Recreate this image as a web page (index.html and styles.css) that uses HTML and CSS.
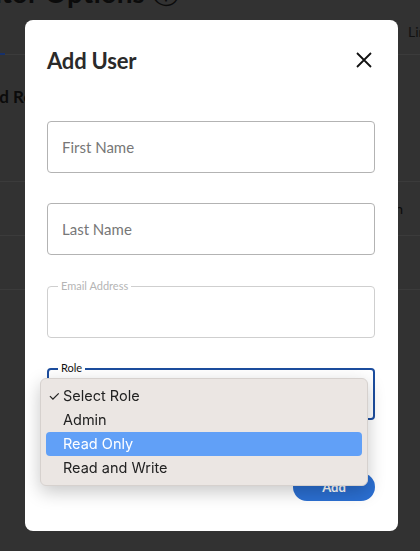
FILE: index.html
```html
<!DOCTYPE html>
<html lang="en">
<head>
<meta charset="utf-8">
<title>Add User</title>
<link rel="stylesheet" href="styles.css">
</head>
<body>
<div class="page">
  <h1 class="page-title">Administrator Options <span class="info">ⓘ</span></h1>
  <nav class="tabs">
    <span class="tab tab-active">Users</span>
    <span class="tab tab-right">Lin</span>
  </nav>
  <h2 class="section-title">Add Role</h2>
  <div class="table">
    <div class="row row-head"><span class="cell-right">Action</span></div>
    <div class="row"></div>
  </div>
</div>

<div class="overlay">
  <div class="modal" role="dialog" aria-label="Add User">
    <div class="modal-header">
      <h3 class="modal-title">Add User</h3>
      <button class="close" aria-label="Close">
        <svg width="16" height="16" viewBox="0 0 16 16"><path d="M1 1 L15 15 M15 1 L1 15" stroke="#111" stroke-width="1.8" fill="none"/></svg>
      </button>
    </div>
    <form class="form">
      <div class="field"><span class="placeholder">First Name</span></div>
      <div class="field"><span class="placeholder">Last Name</span></div>
      <div class="field field-light"><span class="legend legend-light">Email Address</span></div>
      <div class="field field-focus"><span class="legend">Role</span>
        <ul class="menu">
          <li class="menu-item"><span class="check">✓</span>Select Role</li>
          <li class="menu-item">Admin</li>
          <li class="menu-item menu-item-active">Read Only</li>
          <li class="menu-item">Read and Write</li>
        </ul>
      </div>
      <div class="actions"><button type="button" class="btn-add">Add</button></div>
    </form>
  </div>
</div>
</body>
</html>
```

FILE: styles.css
```css
html, body {
  margin: 0;
  padding: 0;
  height: 100%;
  overflow: hidden;
}
body {
  background: #323232;
  font-family: Lato, "Open Sans", sans-serif;
}

/* underlying page (dimmed) */
.page {
  color: #0b0b0b;
}
.page-title {
  margin: -25px 0 0 -134px;
  font-size: 28px;
  font-weight: 700;
  line-height: 34px;
  white-space: nowrap;
}
.info {
  font-weight: 400;
}
.tabs {
  display: flex;
  justify-content: space-between;
  align-items: flex-end;
  height: 45px;
  border-bottom: 1px solid #3b3b3b;
}
.tab {
  font-size: 14px;
  color: #111;
}
.tab-active {
  border-bottom: 2px solid #16306a;
  color: transparent;
  width: 5px;
  height: 2px;
  overflow: hidden;
  margin-bottom: -1px;
}
.tab-right {
  width: 12px;
  overflow: hidden;
  white-space: nowrap;
  padding-bottom: 14px;
}
.section-title {
  margin: 31px 0 0 -22px;
  font-size: 17px;
  font-weight: 700;
  line-height: 22px;
  white-space: nowrap;
}
.table {
  margin-top: 73px;
  border-top: 1px solid #3b3b3b;
}
.row {
  height: 53px;
  border-bottom: 1px solid #3b3b3b;
  display: flex;
  align-items: center;
  justify-content: flex-end;
}
.cell-right {
  font-size: 14px;
  margin-right: 17px;
}

/* modal */
.overlay {
  position: fixed;
  inset: 0;
}
.modal {
  position: absolute;
  left: 25px;
  top: 20px;
  width: 373px;
  box-sizing: border-box;
  padding: 22px 23px 30px 22px;
  background: #fff;
  border-radius: 8px;
}
.modal-header {
  display: flex;
  justify-content: space-between;
  align-items: center;
  height: 36px;
}
.modal-title {
  margin: 0;
  font-size: 22px;
  font-weight: 700;
  color: #2a2a2a;
  letter-spacing: -0.2px;
}
.close {
  border: 0;
  background: none;
  padding: 0;
  margin-right: 3px;
  width: 16px;
  height: 16px;
  display: flex;
}
.form {
  margin-top: 43px;
  display: flex;
  flex-direction: column;
  gap: 30px;
}
.field {
  position: relative;
  height: 52px;
  box-sizing: border-box;
  border: 1px solid #b3b3b3;
  border-radius: 4px;
  display: flex;
  align-items: center;
  padding-left: 14px;
}
.placeholder {
  font-size: 15px;
  color: #777;
}
.field-light {
  border-color: #cfcfcf;
  margin-top: 1px;
}
.field-focus {
  border: 2px solid #1c4d9e;
}
.legend {
  position: absolute;
  top: -8px;
  left: 10px;
  padding: 0 3px;
  background: #fff;
  font-size: 11px;
  line-height: 14px;
  color: #111;
}
.field-focus .legend {
  left: 9px;
  top: -9px;
}
.legend-light {
  color: #b5b5b5;
}
.menu {
  position: absolute;
  left: -9px;
  top: 8px;
  width: 328px;
  box-sizing: border-box;
  margin: 0;
  padding: 5px;
  list-style: none;
  background: #ebe6e3;
  border: 1px solid #d6d1ce;
  border-radius: 6px;
  box-shadow: 0 6px 18px rgba(0, 0, 0, 0.22);
  z-index: 2;
  font-family: Inter, "Noto Sans", sans-serif;
}
.menu-item {
  position: relative;
  height: 24px;
  line-height: 24px;
  padding-left: 17px;
  font-size: 14.5px;
  color: #222;
  border-radius: 4px;
}
.menu-item-active {
  background: #61a0f7;
  color: #fff;
}
.check {
  position: absolute;
  left: 2px;
  font-size: 14px;
}
.actions {
  display: flex;
  justify-content: flex-end;
  margin-top: 23px;
}
.btn-add {
  width: 82px;
  height: 28px;
  border: 0;
  border-radius: 14px;
  background: #2b6fd2;
  color: #fff;
  font-family: Lato, sans-serif;
  font-weight: 700;
  font-size: 13px;
}
```
